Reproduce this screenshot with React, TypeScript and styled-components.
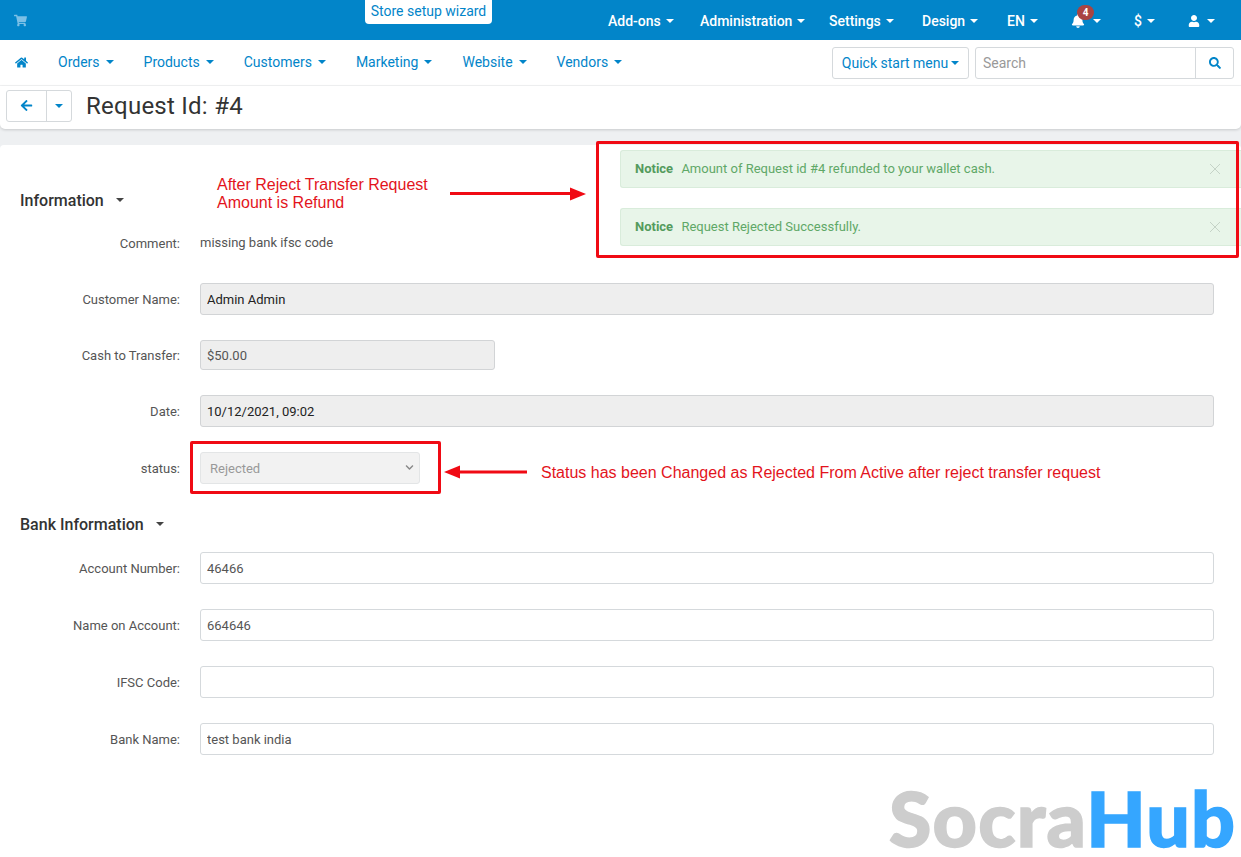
import React from "react";
import styled, { createGlobalStyle } from "styled-components";
import { FaShoppingCart, FaHome, FaArrowLeft, FaSearch, FaBell, FaUser, FaChevronDown } from "react-icons/fa";

const Global = createGlobalStyle`
  html, body { margin: 0; padding: 0; background: #eef0f2; }
  body { font-family: Roboto, "Liberation Sans", sans-serif; font-size: 13px; color: #444; overflow: hidden; }
  * { box-sizing: border-box; }
`;

const Page = styled.div`position: relative; width: 1241px; height: 857px; overflow: hidden; background: #eef0f2;`;

const TopBar = styled.header`
  height: 40px; background: #0285c9; display: flex; align-items: stretch; padding: 0 25px 0 14px; color: #fff;
`;
const CartIcon = styled.span`display: flex; align-items: center; color: #7cc0e6; font-size: 13px;`;
const Wizard = styled.div`
  margin-left: 338px; width: 127px; height: 24px; background: #fff; color: #0285c9; border-radius: 0 0 4px 4px;
  font-size: 14px; text-align: center; line-height: 23px;
`;
const TopMenu = styled.nav`margin-left: auto; display: flex; align-items: center;`;
const TopItem = styled.div<{ $w: number }>`
  width: ${(p) => p.$w}px; display: flex; align-items: center; gap: 5px; font-size: 14px; font-weight: 500; white-space: nowrap; position: relative; padding-top: 1px;
`;
const Caret = styled.i<{ $c?: string; $s?: number }>`
  display: inline-block; width: 0; height: 0; flex: none;
  border-left: ${(p) => p.$s ?? 4}px solid transparent; border-right: ${(p) => p.$s ?? 4}px solid transparent;
  border-top: ${(p) => p.$s ?? 4}px solid ${(p) => p.$c ?? "currentColor"};
`;
const Badge = styled.span`
  position: absolute; left: 6px; top: -8px; width: 17px; height: 15px; border-radius: 8px; background: #a94442; color: #fff;
  font-size: 10px; font-weight: 700; text-align: center; line-height: 15px;
`;

const NavBar = styled.nav`
  height: 46px; background: #fff; border-bottom: 1px solid #f2f3f4; display: flex; align-items: center; padding: 0 7px 0 15px; color: #0285c9;
`;
const HomeLink = styled.span`display: flex; font-size: 13px; margin-right: 30px;`;
const NavItem = styled.div`
  display: flex; align-items: center; gap: 6px; font-size: 14px; margin-right: 30px; position: relative; top: -1px;
`;
const QuickStart = styled.button`
  margin-left: auto; width: 137px; height: 32px; background: #fff; border: 1px solid #d5d9dc; border-radius: 3px; color: #0285c9;
  font: 14px Roboto, sans-serif; display: flex; align-items: center; justify-content: center; gap: 3px; padding: 1px 0 0;
`;
const SearchBox = styled.div`
  margin-left: 6px; width: 259px; height: 32px; border: 1px solid #d5d9dc; border-radius: 3px; display: flex; background: #fff;
`;
const SearchInput = styled.input`
  flex: 1; min-width: 0; border: 0; outline: 0; padding: 0 7px; font: 14px Roboto, sans-serif; color: #444; background: transparent;
  &::placeholder { color: #999; opacity: 1; }
`;
const SearchBtn = styled.span`
  width: 38px; border-left: 1px solid #d5d9dc; display: flex; align-items: center; justify-content: center; color: #0285c9; font-size: 12px;
`;

const TitleBar = styled.div`
  height: 43px; background: #fff; border-radius: 0 0 5px 5px; box-shadow: 0 1px 3px rgba(0,0,0,.16); display: flex; align-items: center;
  padding: 0 0 0 6px; position: relative; margin-bottom: 16px;
`;
const BtnGroup = styled.div`
  display: flex; height: 32px; border: 1px solid #d5d9dc; border-radius: 3px; color: #0285c9; margin-right: 14px; position: relative; top: -2px;
`;
const BackBtn = styled.span`width: 40px; display: flex; align-items: center; justify-content: center; font-size: 13px; border-right: 1px solid #d5d9dc;`;
const MoreBtn = styled.span`width: 24px; display: flex; align-items: center; justify-content: center;`;
const Title = styled.h1`margin: 0; font-size: 24px; font-weight: 400; color: #333; position: relative; top: -2px; letter-spacing: .25px;`;

const Content = styled.main`
  height: 713px; background: #fff; border-radius: 4px 4px 0 0; padding: 43px 27px 0 20px;
`;
const SectionHead = styled.h2<{ $mt?: number }>`
  margin: ${(p) => p.$mt ?? 0}px 0 0; height: 24px; display: flex; align-items: center; gap: 12px; font-size: 16px; font-weight: 500; color: #333;
`;
const Row = styled.div<{ $mt: number }>`
  display: grid; grid-template-columns: 160px 1fr; column-gap: 20px; align-items: center; margin-top: ${(p) => p.$mt}px;
`;
const Label = styled.label`text-align: right; font-size: 13px; color: #555;`;
const Value = styled.div`font-size: 13px; color: #555; line-height: 20px;`;
const Field = styled.input<{ $w?: number; $h?: number; $grey?: boolean; $dark?: boolean }>`
  display: block; width: ${(p) => (p.$w ? `${p.$w}px` : "100%")}; height: ${(p) => p.$h ?? 32}px; padding: 0 6px;
  border: 1px solid ${(p) => (p.$grey ? "#d2d4d6" : "#d5d9dc")}; border-radius: 3px; outline: 0; margin: 0;
  background: ${(p) => (p.$grey ? "#eeeeee" : "#fff")}; color: ${(p) => (p.$dark ? "#222" : "#555")};
  font: 13px Roboto, sans-serif;
`;
const SelectWrap = styled.div`position: relative; width: 220px; height: 32px;`;
const Select = styled.select`
  width: 100%; height: 100%; appearance: none; border: 1px solid #e3e5e6; border-radius: 3px; background: #f2f2f2; color: #999;
  font: 13px Roboto, sans-serif; padding: 0 9px; opacity: 1; margin: 0;
`;
const SelectChevron = styled.span`position: absolute; right: 6px; top: 11px; color: #888; font-size: 9px; display: flex;`;

const Notice = styled.div<{ $top: number }>`
  position: absolute; left: 620px; top: ${(p) => p.$top}px; width: 621px; height: 38px; background: #e8f5e9; border: 1px solid #d9ecdb; border-right: 0;
  border-radius: 3px 0 0 3px; color: #5fa867; font-size: 13px; line-height: 36px; padding-left: 14px;
  b { font-weight: 700; margin-right: 5px; color: #549b5d; }
`;
const NoticeClose = styled.span`position: absolute; left: 588px; top: 12px; display: flex;`;

const RedBox = styled.div<{ $l: number; $t: number; $w: number; $h: number }>`
  position: absolute; left: ${(p) => p.$l}px; top: ${(p) => p.$t}px; width: ${(p) => p.$w}px; height: ${(p) => p.$h}px;
  border: 3px solid #f00a14; border-radius: 2px; pointer-events: none;
`;
const Annotation = styled.div<{ $l: number; $t: number }>`
  position: absolute; left: ${(p) => p.$l}px; top: ${(p) => p.$t}px; color: #e3141c; font: 16px/18px "Liberation Sans", Arial, sans-serif; white-space: nowrap;
`;
const ArrowSvg = styled.svg<{ $l: number; $t: number }>`position: absolute; left: ${(p) => p.$l}px; top: ${(p) => p.$t}px;`;

const Logo = styled.div`
  position: absolute; left: 889px; top: 772px; font: 900 77px/90px Lato, "Noto Sans", sans-serif; letter-spacing: 1.2px; color: #cdcdcd; white-space: nowrap;
  -webkit-text-stroke: 1.5px currentColor;
  span { color: #35a6ff; }
`;

const topItems = [
  { t: "Add-ons", w: 92 }, { t: "Administration", w: 129 }, { t: "Settings", w: 93 }, { t: "Design", w: 85 }, { t: "EN", w: 64 },
];
const navItems = ["Orders", "Products", "Customers", "Marketing", "Website", "Vendors"];

const X = () => (
  <svg width="12" height="12" viewBox="0 0 12 12" stroke="#c5d3c7" strokeWidth="1" fill="none"><path d="M1 1l10 10M11 1L1 11" /></svg>
);

export default function App() {
  return (
    <Page>
      <Global />
      <TopBar>
        <CartIcon><FaShoppingCart /></CartIcon>
        <Wizard>Store setup wizard</Wizard>
        <TopMenu>
          {topItems.map((i) => (
            <TopItem key={i.t} $w={i.w}>{i.t} <Caret /></TopItem>
          ))}
          <TopItem $w={63}>
            <FaBell size={14} />
            <Badge>4</Badge>
            <Caret style={{ marginLeft: 3 }} />
          </TopItem>
          <TopItem $w={54}>$ <Caret /></TopItem>
          <TopItem $w={28}>
            <FaUser size={12} />
            <Caret style={{ marginLeft: 2 }} />
          </TopItem>
        </TopMenu>
      </TopBar>

      <NavBar>
        <HomeLink><FaHome /></HomeLink>
        {navItems.map((n) => (
          <NavItem key={n}>{n} <Caret /></NavItem>
        ))}
        <QuickStart>Quick start menu <Caret /></QuickStart>
        <SearchBox>
          <SearchInput placeholder="Search" />
          <SearchBtn><FaSearch /></SearchBtn>
        </SearchBox>
      </NavBar>

      <TitleBar>
        <BtnGroup>
          <BackBtn><FaArrowLeft /></BackBtn>
          <MoreBtn><Caret /></MoreBtn>
        </BtnGroup>
        <Title>Request Id: #4</Title>
      </TitleBar>

      <Content>
        <SectionHead>Information <Caret $c="#444" /></SectionHead>
        <Row $mt={21}><Label>Comment:</Label><Value>missing bank ifsc code</Value></Row>
        <Row $mt={30}><Label>Customer Name:</Label><Field $grey $dark readOnly value="Admin Admin" /></Row>
        <Row $mt={25}><Label>Cash to Transfer:</Label><Field $grey $w={295} $h={30} readOnly value="$50.00" /></Row>
        <Row $mt={25}><Label>Date:</Label><Field $grey $dark readOnly value="10/12/2021, 09:02" /></Row>
        <Row $mt={25}>
          <Label>status:</Label>
          <SelectWrap>
            <Select disabled value="Rejected" onChange={() => {}}><option>Rejected</option></Select>
            <SelectChevron><FaChevronDown /></SelectChevron>
          </SelectWrap>
        </Row>
        <SectionHead $mt={28}>Bank Information <Caret $c="#444" /></SectionHead>
        <Row $mt={16}><Label>Account Number:</Label><Field readOnly value="46466" /></Row>
        <Row $mt={25}><Label>Name on Account:</Label><Field readOnly value="664646" /></Row>
        <Row $mt={25}><Label>IFSC Code:</Label><Field readOnly value="" /></Row>
        <Row $mt={25}><Label>Bank Name:</Label><Field readOnly value="test bank india" /></Row>
      </Content>

      <Notice $top={150}><b>Notice</b> Amount of Request id #4 refunded to your wallet cash.<NoticeClose><X /></NoticeClose></Notice>
      <Notice $top={208}><b>Notice</b> Request Rejected Successfully.<NoticeClose><X /></NoticeClose></Notice>

      <RedBox $l={596} $t={141} $w={643} $h={117} />
      <RedBox $l={190} $t={441} $w={251} $h={53} />

      <Annotation $l={217} $t={176}>After Reject Transfer Request<br />Amount is Refund</Annotation>
      <Annotation $l={541} $t={464}>Status has been Changed as Rejected From Active after reject transfer request</Annotation>

      <ArrowSvg $l={450} $t={186} width="138" height="16" viewBox="0 0 138 16">
        <path d="M0 7.5H122" stroke="#f00a14" strokeWidth="3" />
        <path d="M120 1.5L136 8L120 14.5Z" fill="#f00a14" />
      </ArrowSvg>
      <ArrowSvg $l={443} $t={464} width="84" height="16" viewBox="0 0 84 16">
        <path d="M16 8H84" stroke="#f00a14" strokeWidth="3" />
        <path d="M17 1.5L1 8L17 14.5Z" fill="#f00a14" />
      </ArrowSvg>

      <Logo>Socra<span>Hub</span></Logo>
    </Page>
  );
}
